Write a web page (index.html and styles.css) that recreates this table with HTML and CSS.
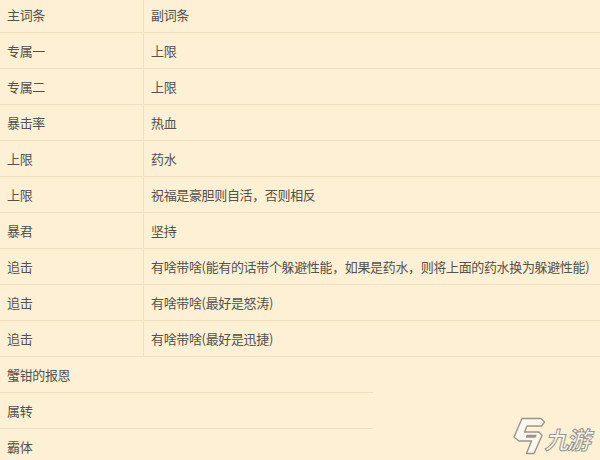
FILE: index.html
```html
<!DOCTYPE html>
<html lang="zh">
<head>
<meta charset="utf-8">
<link rel="stylesheet" href="styles.css">
</head>
<body>
<div class="page">
  <div class="table">
    <div class="row"><div class="cell c1">主词条</div><div class="cell">副词条</div></div>
    <div class="row"><div class="cell c1">专属一</div><div class="cell">上限</div></div>
    <div class="row"><div class="cell c1">专属二</div><div class="cell">上限</div></div>
    <div class="row"><div class="cell c1">暴击率</div><div class="cell">热血</div></div>
    <div class="row"><div class="cell c1">上限</div><div class="cell">药水</div></div>
    <div class="row"><div class="cell c1">上限</div><div class="cell">祝福是豪胆则自活，否则相反</div></div>
    <div class="row"><div class="cell c1">暴君</div><div class="cell">坚持</div></div>
    <div class="row"><div class="cell c1">追击</div><div class="cell">有啥带啥(能有的话带个躲避性能，如果是药水，则将上面的药水换为躲避性能)</div></div>
    <div class="row"><div class="cell c1">追击</div><div class="cell">有啥带啥(最好是怒涛)</div></div>
    <div class="row"><div class="cell c1">追击</div><div class="cell">有啥带啥(最好是迅捷)</div></div>
    <div class="row single"><div class="cell">蟹钳的报恩</div></div>
    <div class="row single"><div class="cell">属转</div></div>
    <div class="row single last"><div class="cell">霸体</div></div>
  </div>
  <div class="logo">
    <svg class="logo-icon" width="34" height="38" viewBox="0 0 34 38">
      <path d="M10,1.5 L29,1.5 L32.5,5 L29.5,9 L15,9 L12.5,15 L27,15 L30,18.5 L22,36.5 L14.5,36.5 L19.5,24 L7,24 L2,20 Z M14.5,20 L23,20 L24,18.5 L15,18.5 Z" fill="#fbf7ef" stroke="#9a958c" stroke-width="1.4" stroke-linejoin="round" fill-rule="evenodd"/>
    </svg>
    <span class="logo-text">九游</span>
  </div>
</div>
</body>
</html>
```

FILE: styles.css
```css
html, body {
  margin: 0;
  padding: 0;
  background: #fdf0d4;
}
.page {
  position: relative;
  width: 600px;
  height: 460px;
  overflow: hidden;
  background: #fdf0d4;
  font-family: "Noto Sans CJK SC", "Noto Sans", sans-serif;
  font-size: 13px;
  color: #55514b;
}
.table {
  display: flex;
  flex-direction: column;
  margin-top: -3px;
}
.row {
  display: grid;
  grid-template-columns: 144px 1fr;
  height: 35px;
  border-bottom: 1px solid #f0e0bf;
  width: 620px;
}
.row.single {
  grid-template-columns: 1fr;
  width: 373px;
}
.row.last {
  border-bottom: none;
}
.cell {
  display: flex;
  align-items: center;
  padding-left: 7px;
  white-space: nowrap;
  letter-spacing: -0.35px;
}
.c1 {
  border-right: 1px solid #f0e0bf;
}
.logo {
  position: absolute;
  left: 512px;
  top: 417px;
  display: flex;
  align-items: flex-start;
  gap: 1px;
}
.logo-text {
  font-family: "Noto Sans CJK SC", sans-serif;
  font-size: 24px;
  line-height: 26px;
  font-weight: 700;
  transform: skewX(-14deg);
  color: #fbf7ef;
  -webkit-text-stroke: 1px #9a958c;
  margin-top: 9px;
  letter-spacing: -2px;
}
```
